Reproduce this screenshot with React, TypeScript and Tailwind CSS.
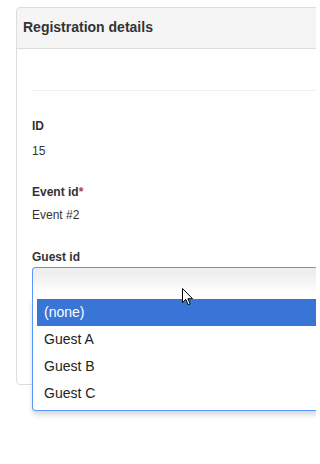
import React from "react";

const options = ["(none)", "Guest A", "Guest B", "Guest C"];

function Cursor() {
  return (
    <svg
      className="absolute left-[182px] top-[288px]"
      width="12"
      height="18"
      viewBox="0 0 12 18"
    >
      <path
        d="M0.5 0.5 L0.5 14.5 L3.8 11.4 L6.2 16.8 L8.2 15.9 L5.9 10.7 L10.5 10.7 Z"
        fill="#fff"
        stroke="#000"
        strokeWidth="1"
        strokeLinejoin="miter"
      />
    </svg>
  );
}

export default function App() {
  return (
    <div
      className="relative w-[316px] h-[464px] overflow-hidden bg-white text-[#333] text-[12px]"
      style={{ fontFamily: '"Liberation Sans", Arial, sans-serif' }}
    >
      <div className="pt-[7px] pl-[16px]">
        {/* Panel */}
        <div className="w-[360px] border border-[#ddd] rounded-[4px]">
          <div className="h-[41px] bg-[#f5f5f5] border-b border-[#ddd] rounded-t-[4px] pl-[6px] flex items-center">
            <h3 className="text-[14px] font-bold leading-[20px] text-[#333] -mt-[2px]">
              Registration details
            </h3>
          </div>

          <div className="pl-[15px] pt-[41px] pb-[85px]">
            <hr className="border-t border-[#eee]" />

            <div className="mt-[27px] font-bold leading-[17px]">ID</div>
            <div className="mt-[8px] leading-[17px]">15</div>

            <div className="mt-[24px] font-bold leading-[17px]">
              Event id<span className="text-[#a94442]">*</span>
            </div>
            <div className="mt-[6px] leading-[17px]">Event #2</div>

            <div className="mt-[25px] font-bold leading-[17px]">Guest id</div>

            {/* Chosen-like select, open */}
            <div className="relative mt-[1px] w-[330px]">
              <div className="h-[32px] border border-b-0 border-[#5897fb] rounded-t-[4px] bg-[linear-gradient(#eeeeee_20%,#ffffff_80%)]" />
              <div className="absolute left-0 top-[32px] w-full border border-t-0 border-[#5897fb] rounded-b-[4px] bg-white shadow-[0_4px_5px_rgba(0,0,0,0.15)] pl-[4px] pb-[3px]">
                <ul className="text-[14px] leading-[17px] text-[#222]">
                  {options.map((o, i) => (
                    <li
                      key={o}
                      className={
                        i === 0
                          ? "pl-[7px] pr-[6px] py-[5px] bg-[#3875d7] text-white"
                          : "pl-[7px] pr-[6px] py-[5px]"
                      }
                    >
                      {o}
                    </li>
                  ))}
                </ul>
              </div>
            </div>
          </div>
        </div>
      </div>
      <Cursor />
    </div>
  );
}
